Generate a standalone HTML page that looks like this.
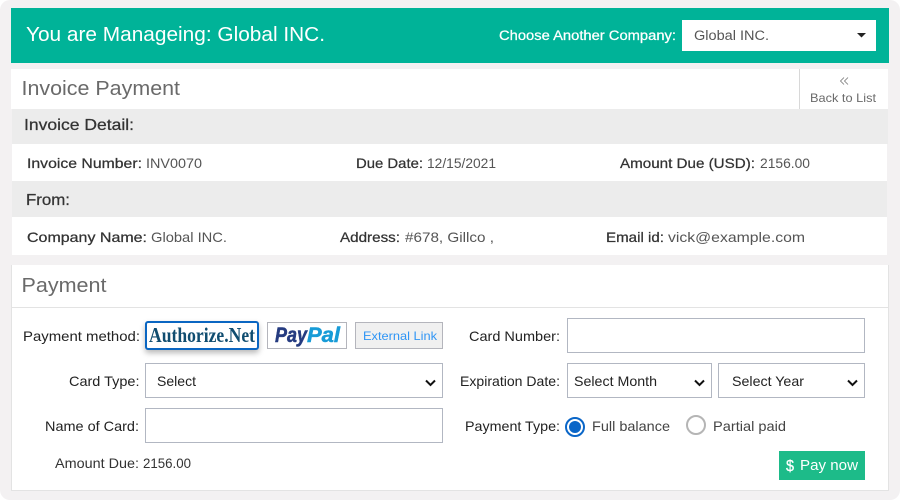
<!DOCTYPE html>
<html lang="en">
<head>
<meta charset="utf-8">
<title>Invoice Payment</title>
<style>
html,body{margin:0;padding:0;width:900px;height:500px;overflow:hidden;background:#fff}
#page{position:relative;width:900px;height:500px;background:#f3f1f2;border-radius:10px;overflow:hidden}
.b{position:absolute;box-sizing:border-box}
.w{background:#fff}
.g{background:#ececec}
.i{background:#fff;border:1px solid #b2b7c2}
svg{position:absolute;left:0;top:0}
text{font-family:"Liberation Sans",sans-serif;font-size:14px;fill:#555}
.d{fill:#333;stroke:#333;stroke-width:.25px}
.f{fill:#222;font-size:14px}
</style>
</head>
<body>
<div id="page">
  <div class="b" style="left:11px;top:8px;width:878px;height:55px;background:#00b398"></div>
  <div class="b" style="left:682px;top:20px;width:194px;height:31px;background:#fff"></div>

  <div class="b w" style="left:11px;top:69px;width:877px;height:40px"></div>
  <div class="b" style="left:799px;top:69px;width:1px;height:40px;background:#d8d8d8"></div>
  <div class="b g" style="left:12px;top:109px;width:876px;height:35px"></div>
  <div class="b w" style="left:12px;top:144px;width:875px;height:37px"></div>
  <div class="b g" style="left:12px;top:181px;width:875px;height:36px"></div>
  <div class="b w" style="left:12px;top:217px;width:875px;height:38px"></div>

  <div class="b w" style="left:11px;top:265px;width:878px;height:226px;border:1px solid #e3e3e3;border-top:0"></div>
  <div class="b" style="left:11px;top:307px;width:878px;height:1px;background:#e3e3e3"></div>

  <div class="b w" style="left:145px;top:321px;width:114px;height:29px;border:2px solid #0a66c2;border-radius:3px;box-shadow:0 3px 6px rgba(0,0,0,.28)"></div>
  <div class="b w" style="left:267px;top:322px;width:80px;height:27px;border:1px solid #b4b5bc"></div>
  <div class="b" style="left:355px;top:322px;width:88px;height:27px;background:#f0f0f0;border:1px solid #b4b5bc"></div>

  <div class="b i" style="left:567px;top:318px;width:298px;height:35px"></div>
  <div class="b i" style="left:145px;top:363px;width:298px;height:35px"></div>
  <div class="b i" style="left:567px;top:363px;width:145px;height:35px"></div>
  <div class="b i" style="left:718px;top:363px;width:147px;height:35px"></div>
  <div class="b i" style="left:145px;top:408px;width:298px;height:35px"></div>
  <div class="b" style="left:779px;top:451px;width:86px;height:29px;background:#1dbb89"></div>

  <svg width="900" height="500" viewBox="0 0 900 500" xmlns="http://www.w3.org/2000/svg">
    <text x="26" y="41" textLength="299" lengthAdjust="spacingAndGlyphs" style="font-size:20px;fill:#fff">You are Manageing: Global INC.</text>
    <text x="499" y="40" textLength="177" lengthAdjust="spacingAndGlyphs" style="font-size:13.5px;fill:#fff;stroke:#fff;stroke-width:.25px">Choose Another Company:</text>
    <text x="694" y="40" textLength="75" lengthAdjust="spacingAndGlyphs" style="font-size:13.5px">Global INC.</text>
    <path d="M857 33h9l-4.500 4.500z" fill="#222"/>

    <text x="21.5" y="95" textLength="158.5" lengthAdjust="spacingAndGlyphs" style="font-size:20px;fill:#6a6a6a">Invoice Payment</text>
    <path d="M844 77.500l-3.500 3.500 3.500 3.500M848 77.500l-3.500 3.500 3.500 3.500" fill="none" stroke="#777" stroke-width=".8"/>
    <text x="810" y="102" textLength="66" lengthAdjust="spacingAndGlyphs" style="font-size:12px;fill:#6a6a6a">Back to List</text>

    <text x="24" y="130" textLength="110" lengthAdjust="spacingAndGlyphs" class="d" style="font-size:16px">Invoice Detail:</text>
    <text x="27" y="168" textLength="115" lengthAdjust="spacingAndGlyphs" class="d">Invoice Number:</text>
    <text x="146" y="168" textLength="56" lengthAdjust="spacingAndGlyphs">INV0070</text>
    <text x="356" y="168" textLength="67" lengthAdjust="spacingAndGlyphs" class="d">Due Date:</text>
    <text x="427" y="168" textLength="69" lengthAdjust="spacingAndGlyphs">12/15/2021</text>
    <text x="620" y="168" textLength="135" lengthAdjust="spacingAndGlyphs" class="d">Amount Due (USD):</text>
    <text x="760" y="168" textLength="50" lengthAdjust="spacingAndGlyphs">2156.00</text>

    <text x="26" y="205" textLength="44" lengthAdjust="spacingAndGlyphs" class="d" style="font-size:16px">From:</text>
    <text x="27" y="242" textLength="120" lengthAdjust="spacingAndGlyphs" class="d">Company Name:</text>
    <text x="151" y="242" textLength="76" lengthAdjust="spacingAndGlyphs">Global INC.</text>
    <text x="340" y="242" textLength="60" lengthAdjust="spacingAndGlyphs" class="d">Address:</text>
    <text x="405" y="242" textLength="89" lengthAdjust="spacingAndGlyphs">#678, Gillco ,</text>
    <text x="606" y="242" textLength="58" lengthAdjust="spacingAndGlyphs" class="d">Email id:</text>
    <text x="668" y="242" textLength="137" lengthAdjust="spacingAndGlyphs">vick@example.com</text>

    <text x="21.5" y="292" textLength="85" lengthAdjust="spacingAndGlyphs" style="font-size:20px;fill:#6a6a6a">Payment</text>

    <text x="23" y="341" textLength="117" lengthAdjust="spacingAndGlyphs" class="f">Payment method:</text>
    <text x="149" y="342" textLength="106" lengthAdjust="spacingAndGlyphs" style="font-family:'Liberation Serif',serif;font-weight:bold;font-size:21px;fill:#104d70">Authorize.Net</text>
    <text x="275" y="342" textLength="32" lengthAdjust="spacingAndGlyphs" style="font-weight:bold;font-style:italic;font-size:21px;fill:#253b80;stroke:#253b80;stroke-width:.5px">Pay</text>
    <text x="307" y="342" textLength="33" lengthAdjust="spacingAndGlyphs" style="font-weight:bold;font-style:italic;font-size:21px;fill:#179bd7;stroke:#179bd7;stroke-width:.5px">Pal</text>
    <text x="363" y="340" textLength="74" lengthAdjust="spacingAndGlyphs" style="font-size:12px;fill:#2f95f5">External Link</text>
    <text x="469" y="341" textLength="91" lengthAdjust="spacingAndGlyphs" class="f">Card Number:</text>

    <text x="69" y="386" textLength="70.500" lengthAdjust="spacingAndGlyphs" class="f">Card Type:</text>
    <text x="157" y="386" textLength="39" lengthAdjust="spacingAndGlyphs" class="f">Select</text>
    <path d="M426 380.500l4.500 4.500 4.500-4.500" fill="none" stroke="#111" stroke-width="2"/>
    <text x="460" y="386" textLength="100" lengthAdjust="spacingAndGlyphs" class="f">Expiration Date:</text>
    <text x="574" y="386" textLength="83" lengthAdjust="spacingAndGlyphs" class="f">Select Month</text>
    <path d="M695 380.500l4.500 4.500 4.500-4.500" fill="none" stroke="#111" stroke-width="2"/>
    <text x="732" y="386" textLength="72" lengthAdjust="spacingAndGlyphs" class="f">Select Year</text>
    <path d="M848 380.500l4.500 4.500 4.500-4.500" fill="none" stroke="#111" stroke-width="2"/>

    <text x="45" y="431" textLength="94" lengthAdjust="spacingAndGlyphs" class="f">Name of Card:</text>
    <text x="465" y="431" textLength="95" lengthAdjust="spacingAndGlyphs" class="f">Payment Type:</text>
    <circle cx="575" cy="427" r="9" fill="#fff" stroke="#0a66c8" stroke-width="2"/>
    <circle cx="575" cy="427" r="6" fill="#0a66c8"/>
    <text x="592" y="431" textLength="78" lengthAdjust="spacingAndGlyphs" style="fill:#444">Full balance</text>
    <circle cx="696" cy="425" r="9" fill="#fff" stroke="#b5b5b5" stroke-width="2"/>
    <text x="713" y="431" textLength="73" lengthAdjust="spacingAndGlyphs" style="fill:#444">Partial paid</text>

    <text x="55" y="468" textLength="84" lengthAdjust="spacingAndGlyphs" style="fill:#333">Amount Due:</text>
    <text x="143" y="468" textLength="48" lengthAdjust="spacingAndGlyphs" style="fill:#333">2156.00</text>
    <text x="786" y="471" textLength="8" lengthAdjust="spacingAndGlyphs" style="font-size:16px;fill:#fff;stroke:#fff;stroke-width:.3px">$</text>
    <text x="800" y="470" textLength="58" lengthAdjust="spacingAndGlyphs" style="font-size:15px;fill:#fff">Pay now</text>
  </svg>
</div>
</body>
</html>
